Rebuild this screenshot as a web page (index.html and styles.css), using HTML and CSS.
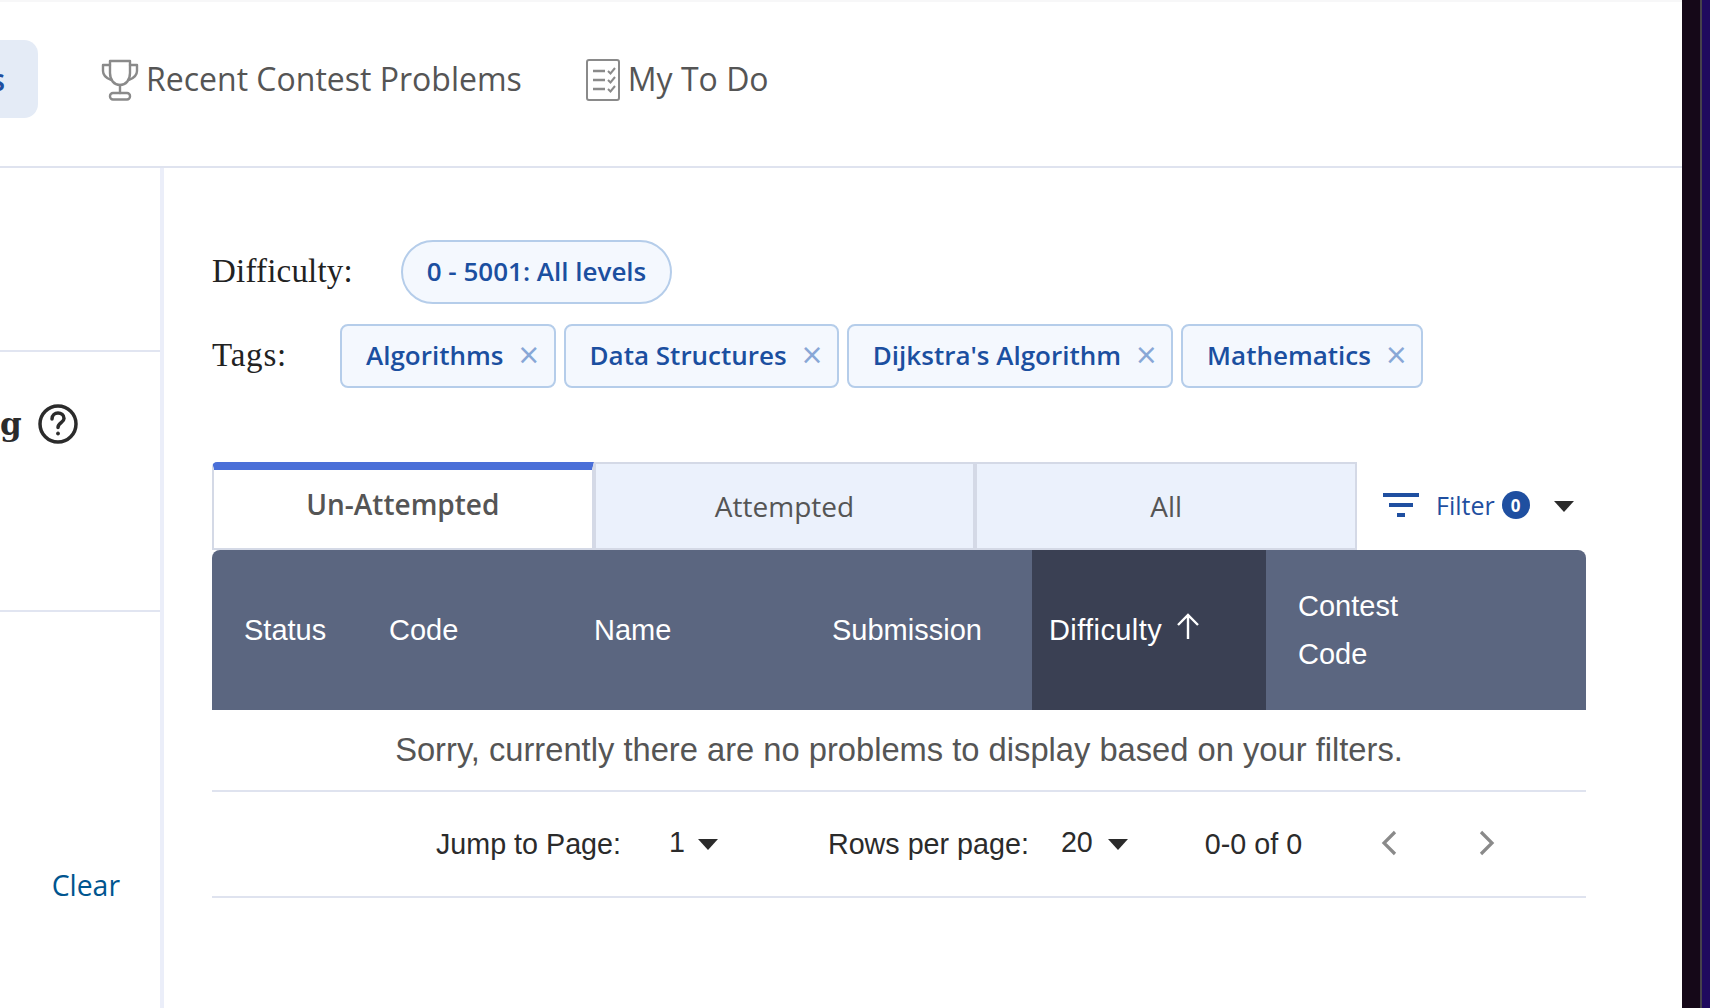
FILE: index.html
```html
<!DOCTYPE html>
<html lang="en">
<head>
<meta charset="utf-8">
<title>Practice problems</title>
<link rel="stylesheet" href="styles.css">
</head>
<body>
<div class="page">
  <main class="main">
    <nav class="nav">
      <a class="nav-active"><span>s</span></a>
      <a class="nav-item nav-contest">
        <svg class="nav-icon" width="38" height="42" viewBox="0 0 38 42" fill="none" stroke="#8a8a8a" stroke-width="2.4" stroke-linejoin="round" stroke-linecap="round">
          <path d="M9 2h20v12c0 7-4 12-10 12S9 21 9 14z"/>
          <path d="M9 6H2v6c0 4 3 7 8 9M29 6h7v6c0 4-3 7-8 9"/>
          <path d="M19 26v8"/>
          <rect x="9" y="34" width="20" height="6.5" rx="3"/>
        </svg>
        <span>Recent Contest Problems</span>
      </a>
      <a class="nav-item nav-todo">
        <svg class="nav-icon" width="34" height="42" viewBox="0 0 34 42" fill="none" stroke="#8a8a8a" stroke-width="2">
          <rect x="1" y="1" width="32" height="40" rx="2"/>
          <path d="M7 12h12M7 21h12M7 30h12" stroke-width="2.4"/>
          <path d="M22 12l2.5 2.5L29 9M22 21l2.5 2.5L29 18M22 30l2.5 2.5L29 27" stroke-width="2"/>
        </svg>
        <span>My To Do</span>
      </a>
    </nav>
    <div class="body">
      <aside class="side">
        <div class="side-sec side-one"></div>
        <div class="side-sec side-two">
          <span class="side-title">g</span>
          <svg class="help" width="40" height="40" viewBox="0 0 40 40" fill="none" stroke="#2b2b2b" stroke-width="3.500">
            <circle cx="20" cy="20" r="18"/>
            <path d="M14 15c0-4 3-6 6-6s6 2 6 5.500c0 4-6 4.500-6 9" stroke-linecap="round"/>
            <circle cx="20" cy="29.500" r="1.500" fill="#2b2b2b" stroke-width="1"/>
          </svg>
        </div>
        <div class="side-sec side-three"><a class="clear">Clear</a></div>
      </aside>
      <section class="content">
        <div class="filter-row">
          <span class="filter-label label-diff">Difficulty:</span>
          <span class="pill">0 - 5001: All levels</span>
        </div>
        <div class="filter-row tags-row">
          <span class="filter-label label-tags">Tags:</span>
          <span class="chip">Algorithms<i class="x">×</i></span>
          <span class="chip">Data Structures<i class="x">×</i></span>
          <span class="chip">Dijkstra's Algorithm<i class="x">×</i></span>
          <span class="chip">Mathematics<i class="x">×</i></span>
        </div>
        <div class="tabs-row">
          <div class="tabs">
            <div class="tab tab-on">Un-Attempted</div>
            <div class="tab">Attempted</div>
            <div class="tab">All</div>
          </div>
          <div class="filter-btn">
            <svg class="filter-icon" width="36" height="24" viewBox="0 0 36 24" fill="#1f4fa0"><rect width="36" height="4"/><rect x="6" y="10" width="24" height="4"/><rect x="14" y="20" width="8" height="4"/></svg>
            <span class="filter-text">Filter</span>
            <span class="badge">0</span>
            <span class="caret caret-filter"></span>
          </div>
        </div>
        <div class="thead">
          <div class="th">Status</div>
          <div class="th">Code</div>
          <div class="th">Name</div>
          <div class="th">Submission</div>
          <div class="th th-sorted">Difficulty
            <svg class="arrow" width="24" height="26" viewBox="0 0 24 26" fill="none" stroke="#fff" stroke-width="2.400"><path d="M12 26V2M2 12L12 2l10 10"/></svg>
          </div>
          <div class="th th-wrap">Contest<br>Code</div>
        </div>
        <div class="empty">Sorry, currently there are no problems to display based on your filters.</div>
        <div class="pager">
          <span>Jump to Page:</span>
          <span class="pager-val page-val">1</span><span class="caret caret-page"></span>
          <span class="rows-label">Rows per page:</span>
          <span class="pager-val rows-val">20</span><span class="caret caret-rows"></span>
          <span class="range">0-0 of 0</span>
          <svg class="chev chev-prev" width="18" height="26" viewBox="0 0 18 26" fill="none" stroke="#8a8a8a" stroke-width="3.200"><path d="M15 2L4 13l11 11"/></svg>
          <svg class="chev chev-next" width="18" height="26" viewBox="0 0 18 26" fill="none" stroke="#8a8a8a" stroke-width="3.200"><path d="M3 2l11 11L3 24"/></svg>
        </div>
      </section>
    </div>
  </main>
  <div class="strip"></div>
</div>
</body>
</html>
```
FILE: styles.css
```css
* { box-sizing: border-box; }
html, body { margin: 0; height: 100%; overflow: hidden; background: #fff; }
body { font-family: "Open Sans", sans-serif; }
.page { display: flex; width: 1710px; height: 1008px; }
.main { width: 1682px; height: 1008px; display: flex; flex-direction: column; border-top: 2px solid #f7f7f8; }

.nav { height: 166px; border-bottom: 2px solid #dfe3ef; display: flex; align-items: flex-start; flex: none; }
.nav-active { width: 38px; height: 78px; margin-top: 38px; background: #e4ebf6; border-radius: 0 14px 14px 0; overflow: hidden; display: flex; justify-content: flex-end; align-items: center; padding-right: 33px; color: #1f4fa0; font-size: 30px; font-weight: 600; }
.nav-item { display: flex; align-items: center; margin-top: 57px; height: 42px; color: #555; font-size: 32px; line-height: 42px; }
.nav-item span { margin-top: -2px; }
.nav-icon { flex: none; }
.nav-contest { margin-left: 63px; gap: 7px; }
.nav-todo { margin-left: 64px; gap: 8px; }

.body { flex: 1; display: flex; min-height: 0; }
.side { width: 164px; flex: none; border-right: 4px solid #ebeef9; display: flex; flex-direction: column; }
.side-sec { border-bottom: 2px solid #e1e5f1; }
.side-one { height: 184px; }
.side-two { height: 260px; display: flex; align-items: flex-start; padding-top: 52px; gap: 16px; }
.side-title { font-family: "DejaVu Serif", serif; font-weight: 700; font-size: 31px; line-height: 40px; color: #2b2b2b; width: 22px; }
.help { flex: none; }
.side-three { border-bottom: 0; flex: 1; padding: 253px 40px 0 0; text-align: right; }
.clear { color: #00558f; font-size: 28.400px; line-height: 40px; }

.content { flex: 1; padding: 72px 96px 0 48px; display: flex; flex-direction: column; min-width: 0; }
.filter-row { display: flex; align-items: center; height: 64px; }
.tags-row { margin-top: 20px; gap: 8px; }
.filter-label { font-family: "Liberation Serif", serif; font-size: 33px; color: #222; letter-spacing: 0.2px; }
.label-diff { width: 189px; flex: none; margin-top: -2px; }
.label-tags { width: 120px; flex: none; margin-top: -2px; letter-spacing: 0.8px; }
.pill { height: 64px; width: 271px; border: 2px solid #b5cdea; border-radius: 32px; background: #f4f8fe; color: #1b4fa0; font-size: 26px; font-weight: 600; display: flex; align-items: center; justify-content: center; padding-bottom: 2px; }
.chip { height: 64px; border: 2px solid #b5cdea; border-radius: 8px; background: #f4f8fe; color: #1b4fa0; font-size: 26px; font-weight: 600; display: flex; align-items: center; padding: 0 14.500px 2px 24px; }
.x { font-style: normal; font-weight: 400; font-size: 36px; color: #88a7d6; margin-left: 15px; line-height: 1; }

.tabs-row { display: flex; align-items: stretch; height: 88px; margin-top: 74px; }
.tabs { display: flex; width: 1145px; flex: none; }
.tab { flex: 1; display: flex; align-items: center; justify-content: center; background: #ebf1fc; border: 2px solid #d4d9e6; color: #555; font-size: 28px; padding-bottom: 1px; }
.tab-on { background: #fff; border-top: 8px solid #4a6fd8; border-radius: 5px 0 0 0; font-weight: 600; padding-bottom: 11px; }
.filter-btn { display: flex; align-items: center; color: #1f4fa0; margin-left: 26px; padding-bottom: 2px; }
.filter-icon { flex: none; }
.filter-text { font-size: 25px; margin-left: 17px; }
.badge { width: 28px; height: 28px; border-radius: 50%; background: #1f4fa0; color: #fff; font-size: 17px; font-weight: 700; display: flex; align-items: center; justify-content: center; margin-left: 7px; }
.caret { width: 0; height: 0; border-left: 10px solid transparent; border-right: 10px solid transparent; border-top: 11px solid #2b2b2b; display: inline-block; flex: none; }
.caret-filter { margin-left: 24px; margin-top: 2px; }

.thead { display: grid; grid-template-columns: 145px 205px 238px 232px 234px 320px; height: 160px; background: #5b6680; border-radius: 8px 8px 0 0; color: #fff; font-family: "Liberation Sans", sans-serif; font-size: 29px; flex: none; overflow: hidden; }
.th { display: flex; align-items: center; padding-left: 32px; }
.th-sorted { background: #3a4053; padding-left: 17px; gap: 14px; letter-spacing: 0.4px; }
.arrow { margin-top: -9px; }
.th-wrap { display: block; line-height: 48px; padding-top: 32px; }

.empty { height: 82px; border-bottom: 2px solid #dfe3ef; display: flex; align-items: center; justify-content: center; font-family: "Liberation Sans", sans-serif; font-size: 32.700px; color: #555; flex: none; }
.pager { height: 106px; border-bottom: 2px solid #dfe3ef; display: flex; align-items: center; padding-left: 224px; font-family: "Liberation Sans", sans-serif; font-size: 28.700px; color: #2b2b2b; flex: none; }
.pager-val { margin-top: -3px; }
.page-val { margin-left: 48px; }
.caret-page { margin-left: 13px; }
.rows-label { margin-left: 110px; }
.rows-val { margin-left: 32px; }
.caret-rows { margin-left: 15px; }
.range { margin-left: 77px; }
.chev { margin-top: -2px; }
.chev-prev { margin-left: 78px; }
.chev-next { margin-left: 80px; }

.strip { width: 28px; height: 1008px; flex: none; background: #150818; border-right: 8px solid #1f0a5e; position: relative; }
.strip::after { content: ""; position: absolute; right: 0; top: 0; bottom: 0; width: 2px; background: #46424a; }
```
